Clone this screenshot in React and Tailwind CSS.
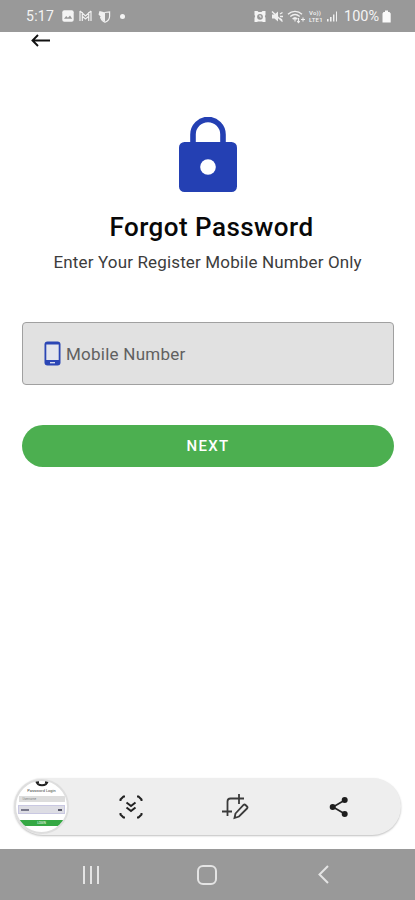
import React from "react";

const StatusBar = () => (
  <div className="flex h-8 items-center bg-[#999999] pl-[26px] pr-[24px] text-[#f4f4f4]">
    <span className="w-[30px] whitespace-nowrap text-[14px] leading-4 tracking-[0.3px]">5:17</span>
    <svg className="ml-[6px]" width="12" height="12" viewBox="0 0 12 12">
      <rect x="0.3" y="0.3" width="11.4" height="11.4" rx="2" fill="#f4f4f4" />
      <path d="M2 8.8 4.2 6l1.7 1.7L8 5.4l2.2 3.4z" fill="#999999" />
    </svg>
    <svg className="ml-[5px]" width="13" height="12" viewBox="0 0 13 12" fill="none" stroke="#f0f0f0" strokeWidth="1.2">
      <path d="M1 1v10M3.3 2v9M9.7 2v9M12 1v10M1 1l5.5 5L12 1M3 6l3.5 3L10 6" />
    </svg>
    <svg className="ml-[6px]" width="13" height="13" viewBox="0 0 13 13">
      <path d="M6.5 2.5 11.6 2v4.2c0 3-2 5-4.6 6.1C4.5 11.2 3 9.4 2.5 7" fill="none" stroke="#f0f0f0" strokeWidth="1.2" />
      <path d="M7 2.6v9.2C4.6 10.6 3 9 2.5 6.5L0.5 4.5 1.5 1l3 .8z" fill="#f0f0f0" />
    </svg>
    <span className="ml-[9px] h-[5px] w-[5px] rounded-full bg-[#f4f4f4]" />
    <div className="ml-auto flex items-center">
      <svg width="12" height="13" viewBox="0 0 12 13">
        <path d="M0.5 1h3l1 1h3l1-1h3v4l-.7 1 .7 2v4H9l-1-.6H4l-1 .6H0.5V8l.7-2-.7-1z" fill="#f4f4f4" />
        <circle cx="6" cy="6.8" r="2.9" fill="#999999" />
        <path d="M6 5v2h1.5" stroke="#f4f4f4" fill="none" />
      </svg>
      <svg className="ml-[5px]" width="13" height="13" viewBox="0 0 13 13">
        <path d="M1 4.500h2.500L7 1.500v10L3.500 8.500H1z" fill="#f0f0f0" />
        <path d="M1 1.500l10.500 10M9 4l2.500-1.500M9 6.500h3M9 8.500l2 1.500" stroke="#f0f0f0" strokeWidth="1.4" />
      </svg>
      <svg className="ml-[3px]" width="19" height="15" viewBox="0 0 19 15" fill="none" stroke="#f0f0f0">
        <path d="M1 5.300c4-4 10-4 14 0M3.300 7.600c3-2.700 6.500-2.700 9.400 0M5.600 9.900c1.500-1.400 3.200-1.400 4.800 0" strokeWidth="1.3" />
        <path d="M8 12.500V9M6.500 10.300 8 8.800l1.500 1.500M11.500 9v4.500M10.200 12.200l1.300 1.400 1.300-1.400M16 8.500v4M14 10.500h4" strokeWidth="1.1" />
      </svg>
      <div className="ml-[3px] w-[16px] whitespace-nowrap text-[6px] font-medium leading-[8px] tracking-[0.2px]">
        <div>Vo))</div>
        <div className="-mt-px">LTE1</div>
      </div>
      <svg className="ml-[2px]" width="11" height="12" viewBox="0 0 11 12" fill="#f0f0f0">
        <path d="M0 9h1.600v2.500H0zM3 7h1.600v4.500H3zM6 4.500h1.400v7H6zM9 1.500h1v10H9z" />
      </svg>
      <span className="mt-[2px] ml-[6px] w-[37px] whitespace-nowrap text-[14.5px] leading-4">100%</span>
      <svg className="ml-px" width="9" height="13" viewBox="0 0 9 13">
        <path d="M3 .5h3V2h1.500L8.700 3.500V12.500H.5V3.500L1.500 2H3z" fill="#fafafa" />
      </svg>
    </div>
  </div>
);

const LockIcon = () => (
  <svg width="58" height="76" viewBox="0 0 58 76">
    <path d="M14 28V17.500a15 15 0 0 1 30 0V28" fill="none" stroke="#2440b3" strokeWidth="5.600" />
    <rect x="0" y="25" width="58" height="50" rx="5.500" fill="#2440b3" />
    <circle cx="29" cy="50" r="7.800" fill="#ffffff" />
  </svg>
);

const Thumbnail = () => (
  <div className="flex h-[55px] w-[55px] flex-col items-center overflow-hidden rounded-full border-2 border-[#dedede] bg-white">
    <svg className="shrink-0" width="14" height="6" viewBox="0 0 14 6">
      <path d="M1 -1c1 7 11 7 12 0M1 1h3M10 1h3" fill="none" stroke="#222222" strokeWidth="2" />
    </svg>
    <div className="mt-px h-[5px] whitespace-nowrap text-[4px] leading-[5px] text-[#444444]">Password Login</div>
    <div className="mt-[3px] h-[6px] w-[46px] shrink-0 bg-[#dddddd] pl-1 text-[3px] leading-[6px] text-[#888888]">Username</div>
    <div className="mt-[3px] flex h-[9px] w-[47px] shrink-0 items-center justify-between border border-[#c9c8e2] bg-[#dddde4] px-[2px]">
      <span className="h-[2px] w-[8px] bg-[#77778a]" />
      <span className="h-[2px] w-[4px] bg-[#555566]" />
    </div>
    <div className="mt-[6px] h-[6px] w-[46px] shrink-0 bg-[#35a844] text-center text-[3px] leading-[6px] text-white">LOGIN</div>
  </div>
);

const CaptureToolbar = () => (
  <div className="mx-[14px] flex h-[57px] items-center rounded-full bg-[#eeeeee] shadow-[0_1px_2px_rgba(0,0,0,0.25)]">
    <Thumbnail />
    <svg className="ml-[50px]" width="24" height="24" viewBox="0 0 24 24" fill="none" stroke="#222222" strokeWidth="2">
      <path d="M1.500 6V4.500l3-3H6M18 1.500h1.500l3 3V6M22.500 18v1.500l-3 3H18M6 22.500H4.500l-3-3V18" />
      <path d="M7.500 7.500 12 11l4.500-3.500M7.500 12.500 12 16l4.500-3.500" />
    </svg>
    <svg className="ml-[79px]" width="27" height="26" viewBox="0 0 27 26" fill="none" stroke="#3a3a3a" strokeWidth="1.800">
      <path d="M5.500 22V7.500q0-3 3-3H22M17 0v10M0 17.500h10" />
      <path d="M13.500 19.500 21.500 11q1-1 2 0l1.500 1.500q1 1 0 2L17 22.500l-4.500 1.500z" />
    </svg>
    <svg className="ml-[80px]" width="20" height="22" viewBox="0 0 20 22">
      <path d="M16 4 4 11l12 7" fill="none" stroke="#242424" strokeWidth="1.700" />
      <g fill="#1d1d1d">
        <circle cx="15.700" cy="4" r="3" />
        <circle cx="3.700" cy="11" r="3" />
        <circle cx="15.700" cy="18" r="3" />
      </g>
    </svg>
  </div>
);

const NavBar = () => (
  <div className="mt-[14px] flex h-[51px] items-center bg-[#999999] pl-[82px]">
    <svg width="18" height="20" viewBox="0 0 18 20" stroke="#e4e4e4" strokeWidth="2">
      <path d="M2 1v18M9 1v18M16 1v18" />
    </svg>
    <div className="ml-[97px] h-[20px] w-[20px] rounded-[6px] border-2 border-[#e4e4e4]" />
    <svg className="ml-[101px]" width="11" height="19" viewBox="0 0 11 19" fill="none" stroke="#e4e4e4" strokeWidth="2">
      <path d="M10 1 1.500 9.500 10 18" />
    </svg>
  </div>
);

const App = () => {
  return (
    <div className="flex h-[900px] w-[415px] flex-col overflow-hidden bg-white font-[Roboto,sans-serif]">
      <StatusBar />
      <button className="ml-[31px] mt-[2px] h-[13px] w-5" aria-label="Back">
        <svg width="20" height="13" viewBox="0 0 20 13" fill="none" stroke="#111111" strokeWidth="1.900">
          <path d="M19 6.500H2M7 1 1.500 6.500 7 12" />
        </svg>
      </button>
      <div className="mt-[70px] flex justify-center">
        <LockIcon />
      </div>
      <h1 className="mt-[18px] whitespace-nowrap pl-[109.5px] text-[26px] font-medium leading-8 tracking-[0.45px] text-[#080808]">
        Forgot Password
      </h1>
      <p className="mt-[9px] whitespace-nowrap pl-[53.5px] text-[17px] leading-5 tracking-[0.150px] text-[#3c3c3c]">
        Enter Your Register Mobile Number Only
      </p>
      <div className="ml-[22px] mr-[21px] mt-[50px] flex h-[63px] shrink-0 items-center rounded-[4px] border border-[#a0a0a0] bg-[#e1e1e1] pl-[21px]">
        <svg width="17" height="25" viewBox="0 0 17 25">
          <rect x="0.500" y="0.500" width="16" height="24" rx="3" fill="#2b46b5" />
          <path d="M2.300 3.500h12.400V19H2.300z" fill="#e3e5ed" />
          <path d="M6 21.700h5" stroke="#dfe3f4" strokeWidth="1.300" />
        </svg>
        <span className="ml-[5px] mt-[2px] whitespace-nowrap text-[17px] tracking-[0.25px] text-[#606060]">Mobile Number</span>
      </div>
      <button className="ml-[22px] mr-[21px] mt-[40px] h-[42px] shrink-0 rounded-full bg-[#4caf50] pt-px text-[15px] font-medium tracking-[1.300px] text-white">
        NEXT
      </button>
      <div className="mt-auto">
        <CaptureToolbar />
        <NavBar />
      </div>
    </div>
  );
};

export default App;
